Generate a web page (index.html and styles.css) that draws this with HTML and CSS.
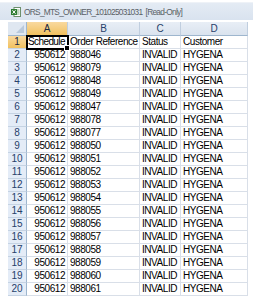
FILE: index.html
```html
<!DOCTYPE html>
<html>
<head>
<meta charset="utf-8">
<link rel="stylesheet" href="styles.css">
</head>
<body>
<div class="window">
  <div class="titlebar">
    <svg class="xl-icon" width="10" height="10" viewBox="0 0 10 10">
      <rect x="3" y="0.5" width="6.5" height="9" fill="#ffffff" stroke="#6d8f6d" stroke-width="1"/>
      <line x1="5" y1="3" x2="8.5" y2="3" stroke="#7fae7f" stroke-width="1"/>
      <line x1="5" y1="5" x2="8.5" y2="5" stroke="#7fae7f" stroke-width="1"/>
      <line x1="5" y1="7" x2="8.5" y2="7" stroke="#7fae7f" stroke-width="1"/>
      <rect x="0" y="2" width="6" height="6" fill="#2e7d32"/>
      <path d="M1.5 3.3 L4.5 6.7 M4.5 3.3 L1.5 6.7" stroke="#ffffff" stroke-width="1"/>
    </svg>
    <span class="title">ORS_MTS_OWNER_101025031031&nbsp; [Read-Only]</span>
  </div>
  <div class="sheet" id="sheet">
    <div class="corner"><span class="tri"></span></div>
    <div class="colhead sel">A</div>
    <div class="colhead">B</div>
    <div class="colhead">C</div>
    <div class="colhead">D</div>

    <div class="rowhead sel">1</div>
    <div class="cell active">Schedule<span class="handle"></span></div>
    <div class="cell">Order Reference</div>
    <div class="cell">Status</div>
    <div class="cell">Customer</div>

    <div class="rowhead">2</div><div class="cell num">950612</div><div class="cell">988046</div><div class="cell">INVALID</div><div class="cell">HYGENA</div>
    <div class="rowhead">3</div><div class="cell num">950612</div><div class="cell">988079</div><div class="cell">INVALID</div><div class="cell">HYGENA</div>
    <div class="rowhead">4</div><div class="cell num">950612</div><div class="cell">988048</div><div class="cell">INVALID</div><div class="cell">HYGENA</div>
    <div class="rowhead">5</div><div class="cell num">950612</div><div class="cell">988049</div><div class="cell">INVALID</div><div class="cell">HYGENA</div>
    <div class="rowhead">6</div><div class="cell num">950612</div><div class="cell">988047</div><div class="cell">INVALID</div><div class="cell">HYGENA</div>
    <div class="rowhead">7</div><div class="cell num">950612</div><div class="cell">988078</div><div class="cell">INVALID</div><div class="cell">HYGENA</div>
    <div class="rowhead">8</div><div class="cell num">950612</div><div class="cell">988077</div><div class="cell">INVALID</div><div class="cell">HYGENA</div>
    <div class="rowhead">9</div><div class="cell num">950612</div><div class="cell">988050</div><div class="cell">INVALID</div><div class="cell">HYGENA</div>
    <div class="rowhead">10</div><div class="cell num">950612</div><div class="cell">988051</div><div class="cell">INVALID</div><div class="cell">HYGENA</div>
    <div class="rowhead">11</div><div class="cell num">950612</div><div class="cell">988052</div><div class="cell">INVALID</div><div class="cell">HYGENA</div>
    <div class="rowhead">12</div><div class="cell num">950612</div><div class="cell">988053</div><div class="cell">INVALID</div><div class="cell">HYGENA</div>
    <div class="rowhead">13</div><div class="cell num">950612</div><div class="cell">988054</div><div class="cell">INVALID</div><div class="cell">HYGENA</div>
    <div class="rowhead">14</div><div class="cell num">950612</div><div class="cell">988055</div><div class="cell">INVALID</div><div class="cell">HYGENA</div>
    <div class="rowhead">15</div><div class="cell num">950612</div><div class="cell">988056</div><div class="cell">INVALID</div><div class="cell">HYGENA</div>
    <div class="rowhead">16</div><div class="cell num">950612</div><div class="cell">988057</div><div class="cell">INVALID</div><div class="cell">HYGENA</div>
    <div class="rowhead">17</div><div class="cell num">950612</div><div class="cell">988058</div><div class="cell">INVALID</div><div class="cell">HYGENA</div>
    <div class="rowhead">18</div><div class="cell num">950612</div><div class="cell">988059</div><div class="cell">INVALID</div><div class="cell">HYGENA</div>
    <div class="rowhead">19</div><div class="cell num">950612</div><div class="cell">988060</div><div class="cell">INVALID</div><div class="cell">HYGENA</div>
    <div class="rowhead">20</div><div class="cell num">950612</div><div class="cell">988061</div><div class="cell">INVALID</div><div class="cell">HYGENA</div>
  </div>
</div>
</body>
</html>
```

FILE: styles.css
```css
html, body {
  margin: 0;
  padding: 0;
  background: #ffffff;
}

.window {
  width: 253px;
  height: 304px;
  overflow: hidden;
  background: #ffffff;
}

.titlebar {
  height: 18px;
  margin-top: 2px;
  display: flex;
  align-items: center;
  padding-left: 11px;
  gap: 3px;
  background: linear-gradient(to bottom, #e4ebf4, #d9e3ef);
  border-top: 1px solid #eef2f7;
  box-sizing: border-box;
}

.xl-icon {
  flex: none;
}

.title {
  font-family: "Liberation Sans", Arial, sans-serif;
  font-size: 8.3px;
  color: #5a5f66;
  white-space: nowrap;
  letter-spacing: -0.7px;
}

.sheet {
  margin-top: 2px;
  margin-left: 8px;
  display: grid;
  grid-template-columns: 19px 41px 72px 41px 67px;
  grid-template-rows: 14px repeat(20, 13px);
  font-family: "Liberation Sans", Arial, sans-serif;
  font-size: 10px;
  letter-spacing: -0.45px;
  color: #000000;
}

.corner {
  background: #dfe7f1;
  border-right: 1px solid #9eb6ce;
  border-bottom: 1px solid #9eb6ce;
  box-sizing: border-box;
  position: relative;
}

.tri {
  position: absolute;
  right: 2px;
  bottom: 2px;
  width: 0;
  height: 0;
  border-left: 8px solid transparent;
  border-bottom: 8px solid #b9c9dc;
}

.colhead {
  background: linear-gradient(to bottom, #e8eef6, #dae3ee);
  border-right: 1px solid #c0cedf;
  border-bottom: 1px solid #9eb6ce;
  box-sizing: border-box;
  text-align: center;
  line-height: 13px;
  color: #27416b;
  letter-spacing: 0;
}

.colhead.sel {
  background: linear-gradient(to bottom, #f9d99f, #f1c15f);
  color: #1a2a44;
}

.rowhead {
  background: #e4ecf7;
  border-right: 1px solid #9eb6ce;
  border-bottom: 1px solid #c5d3e3;
  box-sizing: border-box;
  text-align: center;
  line-height: 12px;
  color: #27416b;
  letter-spacing: 0;
}

.rowhead.sel {
  background: linear-gradient(to bottom, #f9d99f, #f1c15f);
  color: #1a2a44;
}

.cell {
  border-right: 1px solid #d9dfe8;
  border-bottom: 1px solid #d9dfe8;
  box-sizing: border-box;
  line-height: 12px;
  padding: 0 2px;
  white-space: nowrap;
  overflow: visible;
}

.cell.num {
  text-align: right;
}

.cell.active {
  outline: 2px solid #000000;
  outline-offset: -1px;
  padding: 0 1px;
  position: relative;
  letter-spacing: -0.6px;
}

.handle {
  position: absolute;
  right: -3px;
  bottom: -3px;
  width: 4px;
  height: 4px;
  background: #000000;
  border: 1px solid #ffffff;
}
```
